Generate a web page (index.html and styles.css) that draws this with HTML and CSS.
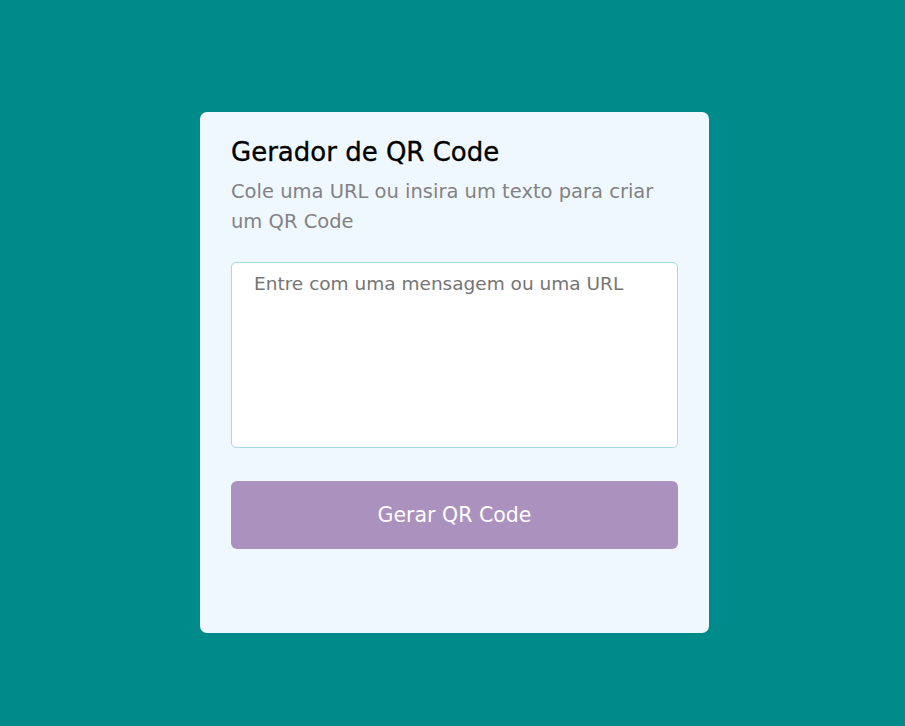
FILE: index.html
```html
<!DOCTYPE html>
<html lang="pt-BR">
<head>
<meta charset="utf-8">
<title>Gerador de QR Code</title>
<link rel="stylesheet" href="styles.css">
</head>
<body>
<main class="page">
  <section class="card">
    <h1 class="title">Gerador de QR Code</h1>
    <p class="subtitle">Cole uma URL ou insira um texto para criar um QR Code</p>
    <textarea class="input" placeholder="Entre com uma mensagem ou uma URL"></textarea>
    <button class="btn" type="button">Gerar QR Code</button>
  </section>
</main>
</body>
</html>
```
FILE: styles.css
```css
* { box-sizing: border-box; }
html, body {
  margin: 0;
  height: 100%;
  background: #008b8b;
  font-family: "DejaVu Sans", sans-serif;
}
.page {
  padding: 112px 0 0 200px;
}
.card {
  width: 509px;
  height: 521px;
  background: #f0f8ff;
  border-radius: 7px;
  padding: 22px 31px 0 31px;
  display: flex;
  flex-direction: column;
}
.title {
  margin: 0;
  font-size: 26px;
  font-weight: 500;
  line-height: 36px;
  color: #000;
  -webkit-text-stroke: 0.35px #000;
}
.subtitle {
  margin: 0;
  margin-top: 7px;
  font-size: 19.5px;
  line-height: 30px;
  color: #828282;
}
.input {
  margin-top: 25px;
  height: 186px;
  width: 100%;
  border: 1px solid #a3dcdf;
  border-radius: 5px;
  background: #fff;
  padding: 8px 22px;
  font-family: inherit;
  font-size: 18.5px;
  line-height: 26px;
  resize: none;
  outline: none;
}
.input::placeholder { color: #757575; }
.btn {
  margin-top: 33px;
  height: 68px;
  width: 100%;
  border: none;
  border-radius: 6px;
  background: #ab91be;
  color: #fff;
  font-family: inherit;
  font-size: 20.5px;
  padding: 0;
}
```
